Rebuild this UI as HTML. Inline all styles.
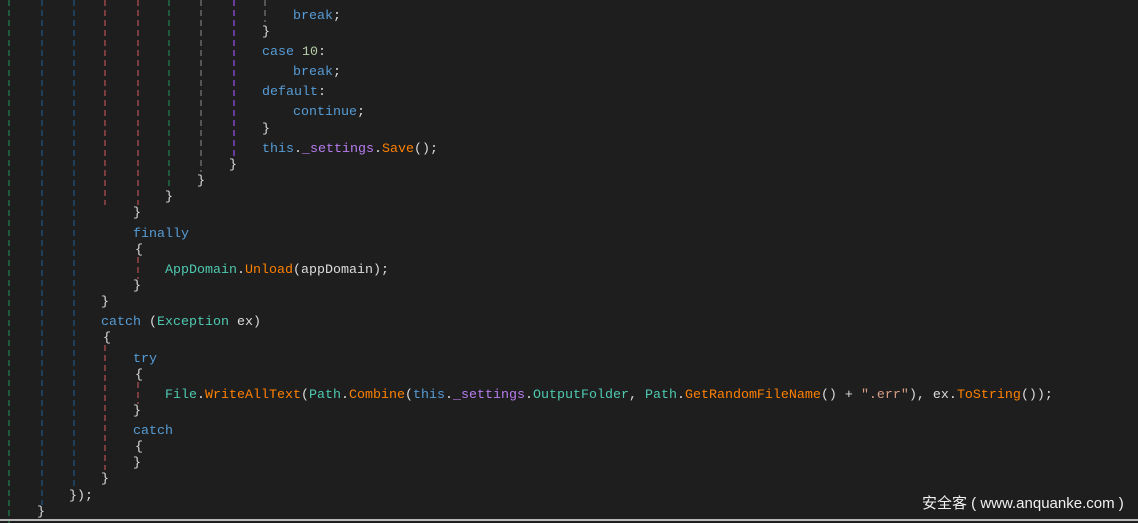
<!DOCTYPE html><html><head><meta charset="utf-8"><style>
body{margin:0;width:1138px;height:523px;background:#1e1e1e;overflow:hidden;position:relative;font-family:"Liberation Mono",monospace;font-size:13.33px;color:#dcdcdc}
.l{position:absolute;white-space:pre;line-height:16px;height:16px;margin-top:2px}
.g{position:absolute;width:2px;background:repeating-linear-gradient(to bottom,var(--c) 0 6px,transparent 6px 10px)}
.k{color:#569cd6}.t{color:#4ec9b0}.m{color:#ff8000}.p{color:#b77cf0}.n{color:#b5cea8}.s{color:#d69d85}
</style></head><body>
<div class="g" style="left:8px;top:0;height:523px;--c:#1f5a3c"></div>
<div class="g" style="left:41px;top:0;height:505px;--c:#1d3f5c"></div>
<div class="g" style="left:73px;top:0;height:488px;--c:#1d3f5c"></div>
<div class="g" style="left:104px;top:0;height:205px;--c:#7a3c3c"></div>
<div class="g" style="left:104px;top:345px;height:125px;--c:#7a3c3c"></div>
<div class="g" style="left:137px;top:0;height:205px;--c:#7a3c3c"></div>
<div class="g" style="left:137px;top:257px;height:22px;--c:#7a3c3c"></div>
<div class="g" style="left:137px;top:382px;height:22px;--c:#7a3c3c"></div>
<div class="g" style="left:168px;top:0;height:188px;--c:#1f5a3c"></div>
<div class="g" style="left:200px;top:0;height:172px;--c:#555"></div>
<div class="g" style="left:233px;top:0;height:156px;--c:#6a3a9a"></div>
<div class="g" style="left:264px;top:0;height:22px;--c:#555"></div>
<div class="l" style="top:7px;left:293px"><span class="k">break</span>;</div>
<div class="l" style="top:23px;left:262px">}</div>
<div class="l" style="top:43px;left:262px"><span class="k">case</span> <span class="n">10</span>:</div>
<div class="l" style="top:63px;left:293px"><span class="k">break</span>;</div>
<div class="l" style="top:83px;left:262px"><span class="k">default</span>:</div>
<div class="l" style="top:103px;left:293px"><span class="k">continue</span>;</div>
<div class="l" style="top:120px;left:262px">}</div>
<div class="l" style="top:140px;left:262px"><span class="k">this</span>.<span class="p">_settings</span>.<span class="m">Save</span>();</div>
<div class="l" style="top:156px;left:229px">}</div>
<div class="l" style="top:172px;left:197px">}</div>
<div class="l" style="top:188px;left:165px">}</div>
<div class="l" style="top:204px;left:133px">}</div>
<div class="l" style="top:225px;left:133px"><span class="k">finally</span></div>
<div class="l" style="top:241px;left:135px">{</div>
<div class="l" style="top:261px;left:165px"><span class="t">AppDomain</span>.<span class="m">Unload</span>(appDomain);</div>
<div class="l" style="top:277px;left:133px">}</div>
<div class="l" style="top:293px;left:101px">}</div>
<div class="l" style="top:313px;left:101px"><span class="k">catch</span> (<span class="t">Exception</span> ex)</div>
<div class="l" style="top:329px;left:103px">{</div>
<div class="l" style="top:350px;left:133px"><span class="k">try</span></div>
<div class="l" style="top:366px;left:135px">{</div>
<div class="l" style="top:386px;left:165px"><span class="t">File</span>.<span class="m">WriteAllText</span>(<span class="t">Path</span>.<span class="m">Combine</span>(<span class="k">this</span>.<span class="p">_settings</span>.<span class="t">OutputFolder</span>, <span class="t">Path</span>.<span class="m">GetRandomFileName</span>() + <span class="s">".err"</span>), ex.<span class="m">ToString</span>());</div>
<div class="l" style="top:402px;left:133px">}</div>
<div class="l" style="top:422px;left:133px"><span class="k">catch</span></div>
<div class="l" style="top:438px;left:135px">{</div>
<div class="l" style="top:454px;left:133px">}</div>
<div class="l" style="top:470px;left:101px">}</div>
<div class="l" style="top:487px;left:69px">});</div>
<div class="l" style="top:503px;left:37px">}</div>
<div style="position:absolute;left:0;top:519px;width:1138px;height:2px;background:#b8b8b8"></div>
<div style="position:absolute;left:922px;top:494px;font-family:'Liberation Sans','Noto Sans CJK SC',sans-serif;font-size:15px;color:#f0f0f0;white-space:pre;line-height:20px">安全客 ( www.anquanke.com )</div>
</body></html>
